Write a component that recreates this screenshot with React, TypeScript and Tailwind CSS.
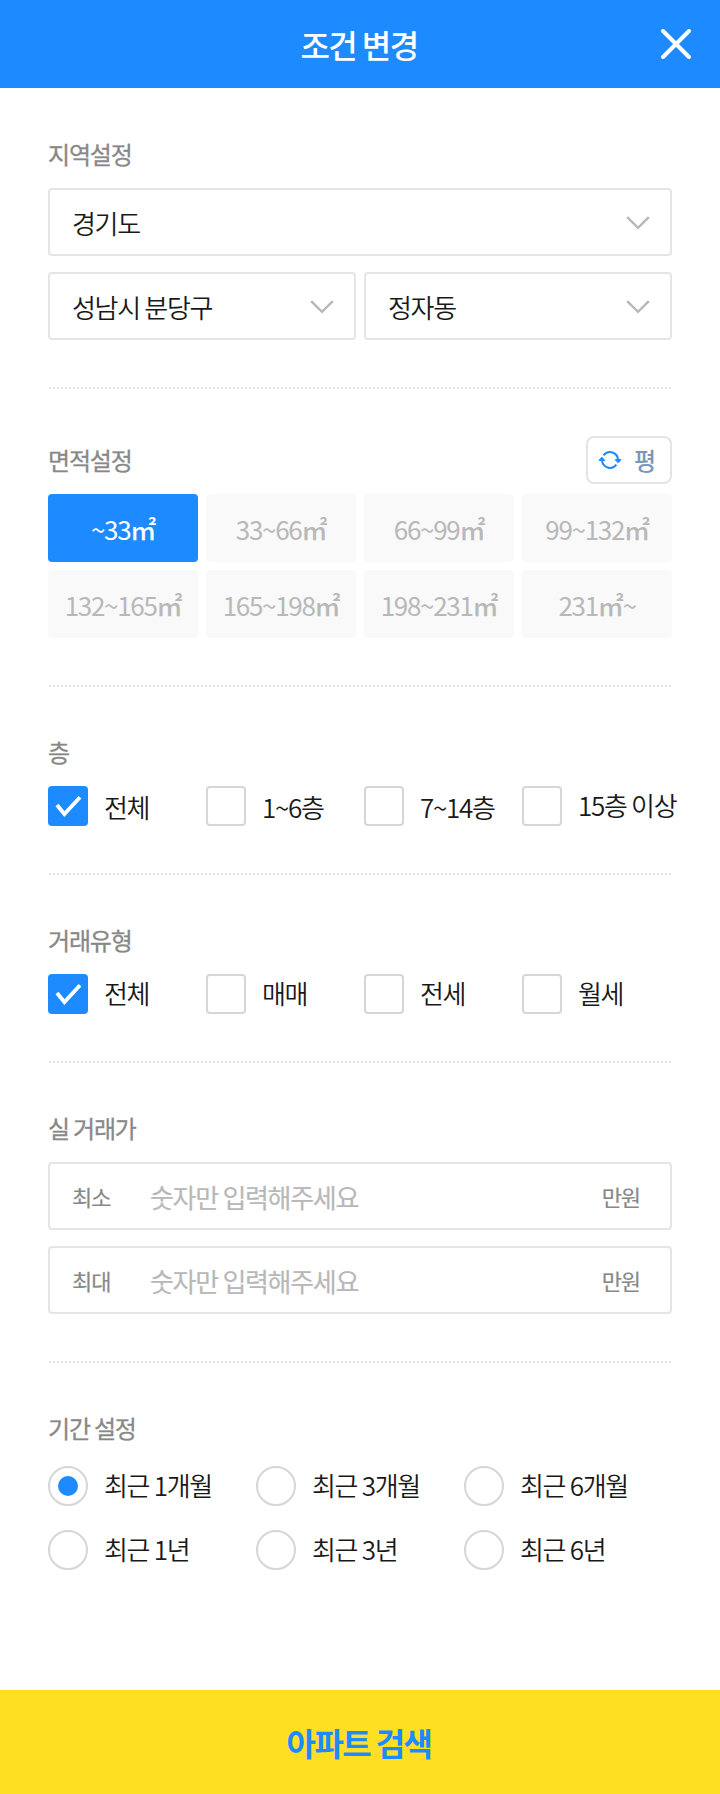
import React, { useState } from 'react';
import clsx from 'clsx';

const areas = ['~33㎡', '33~66㎡', '66~99㎡', '99~132㎡', '132~165㎡', '165~198㎡', '198~231㎡', '231㎡~'];
const deals = ['전체', '매매', '전세', '월세'];
const periods = ['최근 1개월', '최근 3개월', '최근 6개월', '최근 1년', '최근 3년', '최근 6년'];
const floors = [
  { label: '전체', low: true },
  { label: '1~6층', low: true },
  { label: '7~14층', low: true },
  { label: '15층 이상', low: false },
];

const SectionTitle = ({ children }) => (
  <h2 className="text-2xl leading-9 font-normal tracking-[-0.05em] text-[#888] [-webkit-text-stroke:0.3px_#888]">
    {children}
  </h2>
);

// 2px dots with a 2px gap, inset by one pixel on both sides
const Divider = () => (
  <hr className="mx-px h-0.5 border-0 bg-[repeating-linear-gradient(90deg,#e2e2e2_0_2px,transparent_2px_4px)]" />
);

const Select = ({ value, className = '' }) => (
  <button
    className={clsx(
      'flex h-[68px] items-center justify-between rounded-sm border-2 border-[#e5e5e5] pr-5 pl-[22px] text-left text-[26px] font-[350] tracking-[-0.05em] text-[#191919]',
      className
    )}
  >
    <span>{value}</span>
    <svg width="24" height="14" viewBox="0 0 24 14" fill="none" className="mt-px">
      <path d="M1.2 1.2 12 11.8 22.8 1.2" stroke="#b8b8b8" strokeWidth="2.4" />
    </svg>
  </button>
);

const Checkbox = ({ label, checked, low = false, onClick }) => (
  <button onClick={onClick} className="flex h-10 items-center gap-4 whitespace-nowrap">
    <span
      className={clsx(
        'flex size-10 shrink-0 items-center justify-center rounded-sm',
        checked ? 'bg-[#1e8aff]' : 'border-2 border-[#d6d6d6]'
      )}
    >
      {checked && (
        <svg width="40" height="40" viewBox="0 0 40 40" fill="none">
          <path d="M9 19 16.4 28 32 11.3" stroke="#fff" strokeWidth="3.8" />
        </svg>
      )}
    </span>
    <span className={clsx('text-[26px] leading-[38px] font-[350] tracking-[-0.05em] text-[#191919]', low ? 'mt-0.5' : '-mt-0.5')}>
      {label}
    </span>
  </button>
);

const Radio = ({ label, checked, onClick }) => (
  <button onClick={onClick} className="flex h-10 items-center gap-4 whitespace-nowrap">
    <span className="flex size-10 shrink-0 items-center justify-center rounded-full border-2 border-[#d6d6d6]">
      {checked && <span className="size-5 rounded-full bg-[#1e8aff]" />}
    </span>
    <span className="-mt-0.5 text-[26px] leading-[38px] font-[350] tracking-[-0.05em] text-[#191919]">{label}</span>
  </button>
);

const PriceInput = ({ label }) => (
  <label className="flex h-[68px] items-center rounded-sm border-2 border-[#e5e5e5] pr-[30px] pl-[22px]">
    <span className="w-[78px] text-[22px] tracking-[-0.05em] text-[#888] [-webkit-text-stroke:0.2px_#888]">{label}</span>
    <input
      placeholder="숫자만 입력해주세요"
      className="min-w-0 flex-1 text-[26px] tracking-[-0.05em] outline-none placeholder:text-[#b8b8b8] placeholder:[-webkit-text-stroke:0.2px_#b8b8b8]"
    />
    <span className="text-[22px] tracking-[-0.05em] text-[#888] [-webkit-text-stroke:0.2px_#888]">만원</span>
  </label>
);

export default function App() {
  const [area, setArea] = useState(0);
  const [floor, setFloor] = useState(0);
  const [deal, setDeal] = useState(0);
  const [period, setPeriod] = useState(0);

  return (
    <div className="flex h-[1794px] w-[720px] flex-col bg-white font-['Noto_Sans_CJK_KR',sans-serif]">
      <header className="relative flex h-[88px] items-center justify-center bg-[#1e8aff] pr-0.5">
        <h1 className="text-[32px] leading-[48px] font-medium tracking-[-0.05em] text-white">조건 변경</h1>
        <button className="absolute top-7 right-7" aria-label="닫기">
          <svg width="32" height="32" viewBox="0 0 32 32" fill="none">
            <path d="M3 3 29 29M29 3 3 29" stroke="#fff" strokeWidth="4" strokeLinecap="round" />
          </svg>
        </button>
      </header>

      <main className="flex-1 px-12">
        <section className="pt-12 pb-[47px]">
          <SectionTitle>지역설정</SectionTitle>
          <div className="mt-4 grid grid-cols-2 gap-x-2 gap-y-4">
            <Select value="경기도" className="col-span-2" />
            <Select value="성남시 분당구" />
            <Select value="정자동" />
          </div>
        </section>
        <Divider />

        <section className="py-[47px]">
          <div className="flex h-12 items-center justify-between">
            <SectionTitle>면적설정</SectionTitle>
            <button className="flex h-12 w-[86px] items-center rounded-lg border-2 border-[#e5e5e5] pl-2.5 text-2xl font-medium text-[#7c97b9]">
              <svg width="24" height="20" viewBox="0 0 24 20" fill="none" className="mr-3">
                <path d="M5.6 5.4A8 8 0 0 1 20 10" stroke="#1e8aff" strokeWidth="2" />
                <path d="M18.4 14.6A8 8 0 0 1 4 10" stroke="#1e8aff" strokeWidth="2" />
                <path
                  d="M17.2 9.6H23L20.1 12.8ZM1 10.4H6.8L3.9 7.2Z"
                  fill="#1e8aff"
                  stroke="#1e8aff"
                  strokeLinejoin="round"
                />
              </svg>
              평
            </button>
          </div>
          <div className="mt-2.5 grid grid-cols-4 gap-2">
            {areas.map((item, i) => {
              const [before, after] = item.split('㎡');
              return (
                <button
                  key={item}
                  onClick={() => setArea(i)}
                  className={clsx(
                    'h-[68px] rounded-sm text-[26px] tracking-[-0.05em]',
                    area === i ? 'bg-[#1e8aff] text-white' : 'bg-[#f9f9f9] text-[#b8b8b8]'
                  )}
                >
                  {before}
                  <span className="font-medium">㎡</span>
                  {after}
                </button>
              );
            })}
          </div>
        </section>
        <Divider />

        <section className="py-[47px]">
          <SectionTitle>층</SectionTitle>
          <div className="mt-4 grid grid-cols-4 gap-2">
            {floors.map((item, i) => (
              <Checkbox key={item.label} label={item.label} low={item.low} checked={floor === i} onClick={() => setFloor(i)} />
            ))}
          </div>
        </section>
        <Divider />

        <section className="py-[47px]">
          <SectionTitle>거래유형</SectionTitle>
          <div className="mt-4 grid grid-cols-4 gap-2">
            {deals.map((item, i) => (
              <Checkbox key={item} label={item} checked={deal === i} onClick={() => setDeal(i)} />
            ))}
          </div>
        </section>
        <Divider />

        <section className="py-[47px]">
          <SectionTitle>실 거래가</SectionTitle>
          <div className="mt-4 flex flex-col gap-4">
            <PriceInput label="최소" />
            <PriceInput label="최대" />
          </div>
        </section>
        <Divider />

        <section className="pt-[47px]">
          <SectionTitle>기간 설정</SectionTitle>
          <div className="mt-5 grid grid-cols-3 gap-y-6">
            {periods.map((item, i) => (
              <Radio key={item} label={item} checked={period === i} onClick={() => setPeriod(i)} />
            ))}
          </div>
        </section>
      </main>

      <button className="h-[104px] bg-[#ffdf22] pr-0.5 text-[32px] font-bold tracking-[-0.05em] text-[#1e8aff]">아파트 검색</button>
    </div>
  );
}
